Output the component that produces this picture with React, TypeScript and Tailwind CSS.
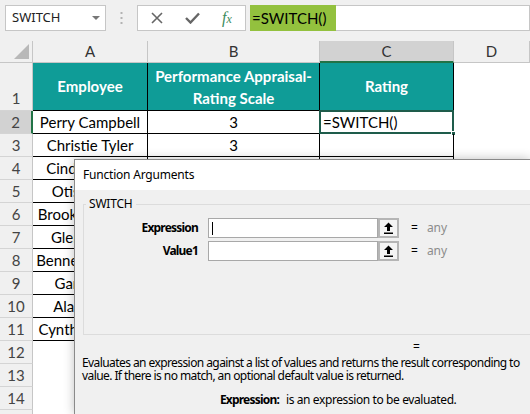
import React from "react";

const cols = [
  { key: "A", w: "w-[115px]" },
  { key: "B", w: "w-[172px]" },
  { key: "C", w: "w-[134px]" },
  { key: "D", w: "w-[76px]" },
];

const employees = [
  { name: "Perry Campbell", score: "3", rating: "=SWITCH()" },
  { name: "Christie Tyler", score: "3", rating: "" },
  { name: "Cindy Harper", score: "2", rating: "" },
  { name: "Otis Barton", score: "4", rating: "" },
  { name: "Brooke Dawson", score: "1", rating: "" },
  { name: "Glenn Moss", score: "5", rating: "" },
  { name: "Bennett Hudson", score: "2", rating: "" },
  { name: "Gary Wells", score: "3", rating: "" },
  { name: "Alan Fisher", score: "4", rating: "" },
  { name: "Cynthia Warren", score: "1", rating: "" },
];

const UpArrowIcon = () => (
  <svg width="11" height="12" viewBox="0 0 11 12">
    <path d="M5.5 0.5 L10 5 L7 5 L7 9 L4 9 L4 5 L1 5 Z" fill="#000" />
    <rect x="1" y="10.5" width="9" height="1.5" fill="#000" />
  </svg>
);

const Toolbar = () => (
  <div className="h-[41px] bg-[#f0f0f0] flex items-start pt-[5px] pl-[5px]">
    <div className="w-[101px] h-[26px] bg-white border border-[#c6c6c6] flex items-center justify-between pl-[6px] pr-[5px]">
      <span className="text-[13px] text-[#222]">SWITCH</span>
      <span className="w-0 h-0 border-l-[4px] border-r-[4px] border-t-[4px] border-l-transparent border-r-transparent border-t-[#777]" />
    </div>
    <div className="w-[31px] h-[26px] flex items-center justify-center">
      <svg width="3" height="12" viewBox="0 0 3 12">
        <rect x="0.5" y="0" width="2" height="2" fill="#b3b3b3" />
        <rect x="0.5" y="5" width="2" height="2" fill="#b3b3b3" />
        <rect x="0.5" y="10" width="2" height="2" fill="#b3b3b3" />
      </svg>
    </div>
    <div className="w-[109px] h-[26px] bg-white border border-[#c6c6c6] flex items-center">
      <div className="w-[32px] flex justify-center pl-[6px]">
        <svg width="12" height="12" viewBox="0 0 12 12">
          <path d="M1 1 L11 11 M11 1 L1 11" stroke="#666" strokeWidth="1.6" />
        </svg>
      </div>
      <div className="w-[40px] flex justify-center pl-[4px]">
        <svg width="15" height="12" viewBox="0 0 15 12">
          <path d="M1 6 L5.5 10.5 L14 1.5" stroke="#666" strokeWidth="2.4" fill="none" />
        </svg>
      </div>
      <div className="w-[34px] flex justify-center">
        <span className="text-[16px] italic text-[#3d8c5d] font-['Liberation_Serif',serif] leading-none">
          f<span className="text-[12px]">x</span>
        </span>
      </div>
    </div>
    <div className="w-[4px]" />
    <div className="w-[86px] h-[26px] bg-[#93c13e] flex items-center pl-[2px] font-['Lato',sans-serif] text-[15px] text-black">
      =SWITCH()
    </div>
    <div className="flex-1 h-[26px] bg-white border border-l-0 border-[#c6c6c6]" />
  </div>
);

const ColumnHeader = () => (
  <div className="flex h-[22px] bg-[#f0f0f0] font-['Lato',sans-serif] text-[15px] text-[#333]">
    <div className="w-[33px] border-r border-b border-[#c6c6c6] flex items-end justify-end pr-[3px] pb-[3px]">
      <svg width="15" height="15" viewBox="0 0 15 15">
        <path d="M15 0 L15 15 L0 15 Z" fill="#b8b8b8" />
      </svg>
    </div>
    {cols.map((c) =>
      c.key === "C" ? (
        <div key={c.key} className={`${c.w} bg-[#d2d2d2] border-r border-[#c6c6c6] border-b-2 border-b-[#217346] flex items-center justify-center`}>
          {c.key}
        </div>
      ) : (
        <div key={c.key} className={`${c.w} border-r border-b border-[#c6c6c6] flex items-center justify-center`}>
          {c.key}
        </div>
      )
    )}
  </div>
);

const RowHead = ({ n, active, tall }: { n?: number; active?: boolean; tall?: boolean }) => (
  <div
    className={`w-[33px] shrink-0 border-b border-[#d4d4d4] flex justify-center text-[#444] ${tall ? "items-end pb-[1px]" : "items-center"} ${
      active ? "bg-[#d2d2d2] border-r-2 border-r-[#217346]" : "bg-[#f0f0f0] border-r border-r-[#c6c6c6]"
    }`}
  >
    {n}
  </div>
);

const Sheet = () => (
  <div className="font-['Lato',sans-serif] text-[15px] text-black">
    <div className="flex h-[48px]">
      <RowHead n={1} tall />
      <div className="w-[115px] bg-[#0f9c97] border-r border-b border-black flex items-center justify-center text-white font-bold">
        Employee
      </div>
      <div className="w-[172px] bg-[#0f9c97] border-r border-b border-black flex items-center justify-center text-white font-bold text-center leading-[22px]">
        Performance Appraisal-
        <br />
        Rating Scale
      </div>
      <div className="w-[134px] bg-[#0f9c97] border-r border-b border-black flex items-center justify-center text-white font-bold">
        Rating
      </div>
      <div className="w-[76px]" />
    </div>
    {employees.map((e, i) => (
      <div key={e.name} className="flex h-[23px]">
        <RowHead n={i + 2} active={i === 0} />
        <div className="w-[115px] border-r border-b border-black flex items-center justify-center whitespace-nowrap overflow-hidden">
          {e.name}
        </div>
        <div className="w-[172px] border-r border-b border-black flex items-center justify-center">{e.score}</div>
        <div className="w-[134px] border-r border-b border-black flex items-center pl-[3px] relative">
          {e.rating}
          {i === 0 && (
            <div className="absolute -left-[1px] -top-[1px] -right-[1px] -bottom-[1px] border-2 border-[#1e5c4b]">
              <div className="absolute -right-[4px] -bottom-[4px] w-[5px] h-[5px] bg-[#1e5c4b] border border-white" />
            </div>
          )}
        </div>
        <div className="w-[76px]" />
      </div>
    ))}
    {[12, 13, 14].map((n) => (
      <div key={n} className="flex h-[23px]">
        <RowHead n={n} />
        <div className="flex-1" />
      </div>
    ))}
    <div className="flex h-[23px]">
      <RowHead />
      <div className="flex-1" />
    </div>
  </div>
);

const ArgRow = ({ label, cursor }: { label: string; cursor?: boolean }) => (
  <div className="flex items-center h-[20px]">
    <div className="w-[114px] text-right font-bold text-[12px] tracking-[-0.8px] text-black">{label}</div>
    <div className="ml-[10px] w-[170px] h-[20px] bg-white border border-[#a8a8a8] flex items-center pl-[3px]">
      {cursor && <div className="w-[1px] h-[13px] bg-black" />}
    </div>
    <div className="w-[21px] h-[20px] border-2 border-[#b5b5b5] bg-[#f4f4f4] flex items-center justify-center">
      <UpArrowIcon />
    </div>
    <span className="ml-[12px] text-[12px] text-black">=</span>
    <span className="ml-[9px] text-[12px] text-[#8c8c8c]">any</span>
  </div>
);

const Dialog = () => (
  <div className="absolute left-[74px] top-[159px] w-[456px] h-[255px] border-l border-t border-[#8a8a8a] shadow-[0_0_10px_rgba(0,0,0,0.25)] flex flex-col font-['Noto_Sans',sans-serif] text-[12px] text-black">
    <div className="h-[30px] bg-white flex items-center pl-[8px] tracking-[-0.2px]">Function Arguments</div>
    <div className="flex-1 bg-[#f0f0f0] pt-[6px]">
      <fieldset className="ml-[8px] h-[139px] border border-r-0 border-[#dcdcdc]">
        <legend className="ml-[2px] px-[3px] leading-[16px] tracking-[-0.2px]">SWITCH</legend>
        <div className="pt-[6px] flex flex-col gap-[3px]">
          <ArgRow label="Expression" cursor />
          <ArgRow label="Value1" />
        </div>
      </fieldset>
      <div className="mt-[4px] pl-[338px] leading-[16px]">=</div>
      <div className="mt-[1px] pl-[7px] leading-[13px] whitespace-nowrap tracking-[-0.58px]">
        Evaluates an expression against a list of values and returns the result corresponding to
        <br />
        value. If there is no match, an optional default value is returned.
      </div>
      <div className="mt-[10px] flex leading-[16px] whitespace-nowrap">
        <div className="w-[204px] text-right font-bold tracking-[-0.8px]">Expression:</div>
        <div className="ml-[7px] tracking-[-0.4px]">is an expression to be evaluated.</div>
      </div>
    </div>
  </div>
);

export default function App() {
  return (
    <div className="w-[530px] h-[414px] overflow-hidden relative bg-white font-['Noto_Sans',sans-serif]">
      <Toolbar />
      <ColumnHeader />
      <Sheet />
      <Dialog />
    </div>
  );
}
